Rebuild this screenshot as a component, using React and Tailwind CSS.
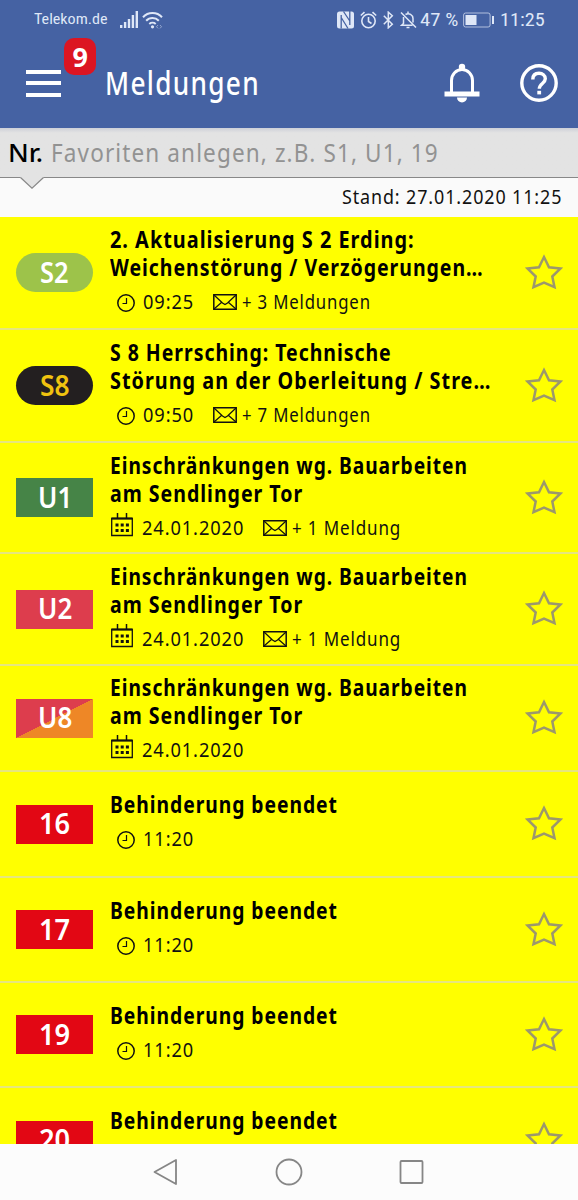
import { useLayoutEffect, useRef } from "react";
import clsx from "clsx";

const messages = [
  {
    line: "S2",
    lineWidth: 29,
    badge: "rounded-full bg-[#9dc34a] text-white",
    height: "h-[113px]",
    title: [
      ["2. Aktualisierung S 2 Erding:", 305],
      ["Weichenstörung / Verzögerungen…", 374],
    ],
    time: "09:25",
    more: ["+ 3 Meldungen", 129],
  },
  {
    line: "S8",
    lineWidth: 30,
    badge: "rounded-full bg-[#231f20] text-[#f0c30f]",
    height: "h-[113px]",
    title: [
      ["S 8 Herrsching: Technische", 282],
      ["Störung an der Oberleitung / Stre…", 381],
    ],
    time: "09:50",
    more: ["+ 7 Meldungen", 129],
  },
  {
    line: "U1",
    lineWidth: 34,
    badge: "bg-[#468447] text-white",
    height: "h-[111px]",
    title: [
      ["Einschränkungen wg. Bauarbeiten", 358],
      ["am Sendlinger Tor", 193],
    ],
    date: "24.01.2020",
    more: ["+ 1 Meldung", 109],
  },
  {
    line: "U2",
    lineWidth: 34,
    badge: "bg-[#dd3d4d] text-white",
    height: "h-[112px]",
    title: [
      ["Einschränkungen wg. Bauarbeiten", 358],
      ["am Sendlinger Tor", 193],
    ],
    date: "24.01.2020",
    more: ["+ 1 Meldung", 109],
  },
  {
    line: "U8",
    lineWidth: 34,
    badge:
      "bg-[linear-gradient(to_bottom_right,#dd3d4d_50%,#ee8726_50%)] text-white",
    height: "h-[106px]",
    titleTop: "pt-2",
    title: [
      ["Einschränkungen wg. Bauarbeiten", 358],
      ["am Sendlinger Tor", 193],
    ],
    date: "24.01.2020",
  },
  { line: "16", height: "h-[106px]", time: "11:20" },
  { line: "17", height: "h-[105px]", time: "11:20" },
  { line: "19", height: "h-[105px]", time: "11:20" },
  { line: "20", height: "h-[106px]" },
].map((m) => ({
  lineWidth: 31,
  badge: "bg-[#e20714] text-white",
  titleTop: m.title ? "pt-[9px]" : "pt-[19px]",
  title: [["Behinderung beendet", 228]],
  ...m,
}));

// Squeezes a line of text horizontally to the given width
function FitText({ width, className, children }) {
  const ref = useRef(null);

  useLayoutEffect(() => {
    const el = ref.current;
    el.style.transform = `scaleX(${width / el.offsetWidth})`;
  }, [width, children]);

  return (
    <span className={clsx("block shrink-0", className)} style={{ width }}>
      <span ref={ref} className="inline-block origin-left whitespace-nowrap">
        {children}
      </span>
    </span>
  );
}

function StatusBar() {
  return (
    <div className="flex h-[39px] items-center pl-[34px] pr-[33px] font-[Roboto,sans-serif] text-[#dfe7f7]">
      <FitText width={74} className="text-[15px]">
        Telekom.de
      </FitText>
      <svg className="ml-3 shrink-0" width="18" height="18" viewBox="0 0 18 18" fill="currentColor">
        <rect x="0" y="14" width="2.4" height="3" />
        <rect x="3.9" y="11" width="2.4" height="6" />
        <rect x="7.8" y="8" width="2.4" height="9" />
        <rect x="11.700" y="4" width="2.4" height="13" />
        <rect x="15.600" y="0" width="2.4" height="17" />
      </svg>
      <svg className="ml-1 shrink-0" width="22" height="18" viewBox="0 0 22 18" fill="none" stroke="currentColor" strokeWidth="2">
        <path d="M1 6.2a13 13 0 0 1 19 0" />
        <path d="M4.2 9.8a8.6 8.6 0 0 1 12.6 0" />
        <path d="M7.3 13a4.8 4.8 0 0 1 6.4 0" />
        <circle cx="10.5" cy="15.8" r="1.6" fill="currentColor" stroke="none" />
        <path d="m16 14-1.5 1.7L16 17.4m2-3.4 1.5 1.7L18 17.4" strokeWidth="1" opacity=".5" />
      </svg>

      <svg className="ml-auto shrink-0" width="17" height="18" viewBox="0 0 17 18">
        <rect width="17" height="17" y=".5" rx="2.500" fill="currentColor" />
        <path d="M4.200 17.500V4M6.500 .5l6.300 9.500M4.200 6.500 11 17.500M12.800 0v14" fill="none" stroke="#4562a3" strokeWidth="1.300" />
      </svg>
      <svg className="ml-[6px] shrink-0" width="17" height="18" viewBox="0 0 17 18" fill="none" stroke="currentColor" strokeWidth="1.6">
        <circle cx="8.5" cy="10" r="6.7" />
        <path d="M8.5 6v4.5l3 2M.8 4.5 4.5 1.2M16.2 4.5l-3.7-3.3" />
      </svg>
      <svg className="ml-[6px] shrink-0" width="11" height="18" viewBox="0 0 11 18" fill="none" stroke="currentColor" strokeWidth="1.5">
        <path d="m.8 4.800 8.500 8.400-4 3.600V1.200l4 3.600L.8 13.200" />
      </svg>
      <svg className="ml-[6px] shrink-0" width="17" height="18" viewBox="0 0 17 18" fill="none" stroke="currentColor" strokeWidth="1.5">
        <path d="M1 1.5 16 16.5M3.5 6v6.5L1.500 14.300h11M5.500 3.500C9 1.300 13 4 13 7.500v4M8 .5v2M6.500 16.500h3" />
      </svg>
      <FitText width={38} className="ml-[3px] text-[18px]">
        47 %
      </FitText>
      <svg className="ml-[5px] shrink-0" width="31" height="16" viewBox="0 0 31 16">
        <rect x=".6" y="1" width="26.5" height="14" rx="2" fill="none" stroke="currentColor" strokeOpacity=".7" />
        <rect x="2.5" y="3" width="11" height="10" fill="currentColor" />
        <rect x="29" y="4" width="2" height="8" fill="currentColor" />
      </svg>
      <FitText width={45} className="ml-[6px] text-[18px]">
        11:25
      </FitText>
    </div>
  );
}

function Header() {
  return (
    <header className="flex h-[88px] items-center pl-[26px] pr-[20px]">
      <button className="relative flex w-[35px] flex-col gap-[7.5px]">
        <span className="h-1 bg-white" />
        <span className="h-1 bg-white" />
        <span className="h-1 bg-white" />
        <span className="absolute -top-[32px] left-[38px] flex h-[37px] w-8 items-center justify-center rounded-[10px] bg-[#dc1522] text-[27px] font-bold leading-none text-white">
          <FitText width={15}>9</FitText>
        </span>
      </button>
      <FitText width={155} className="ml-[44px] text-[33px] leading-[44px] font-medium tracking-wider text-white">
        Meldungen
      </FitText>
      <svg className="ml-auto mr-[40px] shrink-0" width="36" height="40" viewBox="0 0 36 40">
        <circle cx="18" cy="4" r="3.2" fill="#fff" />
        <path d="M7.5 31V17.5a10.500 11 0 0 1 21 0V31" fill="none" stroke="#fff" strokeWidth="3" />
        <path d="M.5 28.5h35v5H.5zM13 34.5h10a5 5 0 0 1-10 0z" fill="#fff" />
      </svg>
      <svg className="shrink-0" width="38" height="38" viewBox="0 0 38 38" fill="none" stroke="#fff">
        <circle cx="19" cy="19" r="17.2" strokeWidth="3.4" />
        <path d="M12.800 15.500C12.800 11 15.500 9.300 19 9.300s6.300 2 6.300 5.500c0 4.700-6 4.700-6 10" strokeWidth="3.400" />
        <path d="M19.200 26.800v3.600" strokeWidth="3.8" />
      </svg>
    </header>
  );
}

function Clock() {
  return (
    <svg className="relative top-px ml-[7px] mr-2 shrink-0" width="18" height="18" viewBox="0 0 18 18" fill="none" stroke="#111">
      <circle cx="9" cy="9" r="8.2" strokeWidth="1.5" />
      <path d="M9.5 4v5.500H5.500" strokeWidth="1.2" />
    </svg>
  );
}

function Calendar() {
  return (
    <svg className="relative -top-[3px] ml-px mr-[9px] shrink-0" width="22" height="24" viewBox="0 0 22 24">
      <path d="M.7 5.5h20.600v17H.7z" fill="none" stroke="#111" strokeWidth="1.3" />
      <path d="M.5 5.5h21" stroke="#111" strokeWidth="2" />
      <path d="M6.500 0v5.500M15.500 0v5.500" stroke="#111" strokeWidth="1.5" />
      <path
        d="M4.500 12h3m2.200 0h3m2.200 0h3M4.500 17.500h3m2.200 0h3m2.200 0h3"
        stroke="#111"
        strokeWidth="3"
      />
    </svg>
  );
}

function Envelope() {
  return (
    <svg className="shrink-0" width="24" height="16" viewBox="0 0 24 16" fill="none" stroke="#111">
      <path d="M.8.8h22.400v14.400H.8z" strokeWidth="1.5" />
      <path d="m1 1 8.500 8 2.500 1.500L14.500 9 23 1M1 15l8-7m14 7-8-7" strokeWidth="1.2" />
    </svg>
  );
}

function Star() {
  return (
    <svg className="relative -top-px mr-[15px] shrink-0" width="38" height="36" viewBox="0 0 38 36" fill="none" stroke="#9c986c" strokeWidth="2.5">
      <path d="m19 3 5 10.300L35.500 14.500l-8.200 8L29.500 33.200 19 28.500 8.500 33.200l2.200-10.700-8.200-8L14 13.300z" />
    </svg>
  );
}

function Message({ line, lineWidth, badge, height, title, titleTop, time, date, more }) {
  return (
    <li className={clsx("flex shrink-0 items-center border-b-2 border-[#e6e67e] pl-4", height)}>
      <div className={clsx("flex h-[39px] w-[77px] shrink-0 items-center justify-center text-[29px] leading-[38px] font-semibold", badge)}>
        <FitText width={lineWidth} className="pb-0.5">
          {line}
        </FitText>
      </div>
      <div className={clsx("ml-[17px] flex-1 self-start", titleTop)}>
        {title.map(([text, width]) => (
          <FitText key={text} width={width} className="h-7 text-[22.5px] leading-7 font-bold tracking-wider text-black">
            {text}
          </FitText>
        ))}
        {(time || date) && (
          <div className="mt-1 flex h-8 items-center text-[20px] leading-8 tracking-wider text-[#111]">
            {time ? <Clock /> : <Calendar />}
            <FitText width={time ? 51 : 102}>{time || date}</FitText>
            {more && (
              <div className="ml-[19px] flex items-center gap-[5px]">
                <Envelope />
                <FitText width={more[1]}>{more[0]}</FitText>
              </div>
            )}
          </div>
        )}
      </div>
      <Star />
    </li>
  );
}

export default function App() {
  return (
    <div className="flex h-[1200px] w-[578px] flex-col overflow-hidden bg-[#fafafa] font-['Noto_Sans',sans-serif] [font-stretch:75%]">
      <div className="h-32 shrink-0 bg-[#4562a3]">
        <StatusBar />
        <Header />
      </div>

      <div className="relative flex h-[50px] shrink-0 items-center border-b border-[#888] bg-linear-to-b from-[#cdd0d8] to-[#e3e3e3] to-10% pl-2 text-[26px] leading-[48px]">
        <FitText width={35} className="pb-0.5 font-medium text-black">
          Nr.
        </FitText>
        <FitText width={388} className="ml-2 pb-0.5 tracking-wider text-[#929292]">
          Favoriten anlegen, z.B. S1, U1, 19
        </FitText>
        <svg className="absolute top-[48px] left-5" width="24" height="13" viewBox="0 0 24 13">
          <path d="M0 0h24v1L12 12 0 1z" fill="#e3e3e3" />
          <path d="M.5 1.500 12 12.200 23.500 1.500" fill="none" stroke="#888" strokeWidth="1.2" />
        </svg>
      </div>

      <div className="flex h-[39px] shrink-0 items-center justify-end pr-4 pb-0.5 text-[20.5px] tracking-wider text-[#111]">
        <FitText width={220}>Stand: 27.01.2020 11:25</FitText>
      </div>

      <ul className="flex h-[927px] shrink-0 flex-col overflow-hidden bg-[#ffff00]">
        {messages.map((m) => (
          <Message key={m.line} {...m} />
        ))}
      </ul>

      <nav className="flex h-14 shrink-0 items-center bg-[#fcfcfc] pl-[153px]">
        <svg width="272" height="28" viewBox="0 0 272 28" fill="none" stroke="#868686" strokeWidth="1.8" strokeLinejoin="round">
          <path d="M23 2v24L1.500 14z" />
          <circle cx="136" cy="14" r="12.5" />
          <rect x="247.500" y="3" width="22" height="22" rx="1" />
        </svg>
      </nav>
    </div>
  );
}
